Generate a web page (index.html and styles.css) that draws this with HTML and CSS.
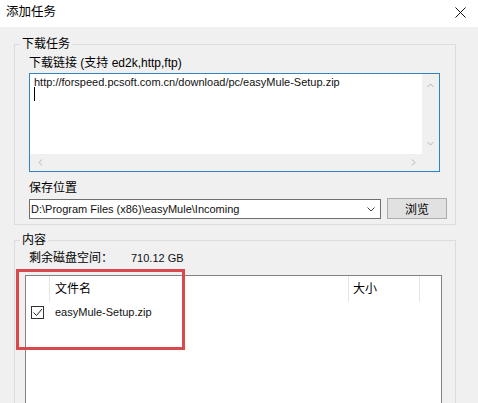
FILE: index.html
```html
<!DOCTYPE html>
<html>

<head>
    <meta charset="utf-8" />
    <title>添加任务</title>
    <link rel="stylesheet" href="styles.css">
</head>

<body>
    <div class="titlebar">
        <span class="title">添加任务</span>
        <svg class="close" width="11" height="11" viewBox="0 0 11 11">
            <path d="M0.5 0.5 L10.5 10.5 M10.5 0.5 L0.5 10.5" stroke="#111" stroke-width="1" fill="none" />
        </svg>
    </div>

    <div class="content">
        <fieldset class="group group-download">
            <legend>下载任务</legend>
            <div class="label">下载链接 (支持 ed2k,http,ftp)</div>
            <div class="textbox">
                <div class="text-area">
                    <div class="text-line latin">http://forspeed.pcsoft.com.cn/download/pc/easyMule-Setup.zip</div>
                    <div class="caret"></div>
                </div>
                <div class="vscroll">
                    <svg width="7" height="5" viewBox="0 0 7 5"><path d="M0.5 4 L3.5 1 L6.5 4" stroke="#b3b3b3" fill="none" /></svg>
                    <svg width="7" height="5" viewBox="0 0 7 5"><path d="M0.5 1 L3.5 4 L6.5 1" stroke="#b3b3b3" fill="none" /></svg>
                </div>
                <div class="hscroll">
                    <svg width="5" height="7" viewBox="0 0 5 7"><path d="M4 0.5 L1 3.5 L4 6.5" stroke="#b3b3b3" fill="none" /></svg>
                    <svg width="5" height="7" viewBox="0 0 5 7"><path d="M1 0.5 L4 3.5 L1 6.5" stroke="#b3b3b3" fill="none" /></svg>
                </div>
                <div class="corner"></div>
            </div>

            <div class="label label-save">保存位置</div>
            <div class="path-row">
                <div class="combo">
                    <span class="latin">D:\Program Files (x86)\easyMule\Incoming</span>
                    <svg width="8" height="5" viewBox="0 0 8 5"><path d="M0.5 0.5 L4 4 L7.5 0.5" stroke="#444" fill="none" /></svg>
                </div>
                <button class="btn">浏览</button>
            </div>
        </fieldset>

        <fieldset class="group group-files">
            <legend>内容</legend>
            <div class="disk">
                <span class="disk-label">剩余磁盘空间：</span>
                <span class="disk-value latin">710.12 GB</span>
            </div>
            <div class="list">
                <div class="list-head">
                    <div class="col col-check"></div>
                    <div class="col col-name">文件名</div>
                    <div class="col col-size">大小</div>
                    <div class="col col-rest"></div>
                </div>
                <div class="list-row">
                    <div class="col col-check">
                        <span class="checkbox">
                            <svg width="11" height="11" viewBox="0 0 11 11"><path d="M1.5 5.5 L4.5 8.5 L10 2" stroke="#222" stroke-width="1" fill="none" /></svg>
                        </span>
                    </div>
                    <div class="col col-name latin">easyMule-Setup.zip</div>
                </div>
            </div>
        </fieldset>
    </div>

    <div class="highlight"></div>
</body>

</html>
```

FILE: styles.css
```css
/* base */

body {
    margin: 0;
    width: 478px;
    height: 403px;
    overflow: hidden;
    position: relative;
    background-color: #f0f0f0;
    color: #000;
    font-family: "Liberation Sans", "Noto Sans CJK SC", sans-serif;
    font-size: 12px;
}

.latin {
    font-size: 11px;
    color: #111;
}

/* title bar */

.titlebar {
    height: 27px;
    background-color: #fff;
    display: flex;
    justify-content: space-between;
    align-items: flex-start;
    padding: 5px 12px 0 6px;
    box-sizing: border-box;
}

.title {
    line-height: 14px;
    font-size: 12.5px;
}

.close {
    margin-top: 2px;
}

/* group boxes */

.content {
    padding: 11px 22px 0 14px;
}

.group {
    margin: 0;
    min-width: 0;
    border: 1px solid #dcdcdc;
}

.group legend {
    line-height: 12px;
    padding: 0 2px;
}

.group-download {
    padding: 5px 8px 5px 14px;
}

.group-download legend {
    margin-left: -9px;
}

.group-files {
    margin-top: 9px;
    padding: 4px 13px 0 10px;
}

.group-files legend {
    margin-left: -5px;
}

.label {
    line-height: 16px;
}

.label-save {
    margin-top: 8px;
}

/* url box */

.textbox {
    margin: 2px 7px 0 0;
    height: 99px;
    box-sizing: border-box;
    border: 1px solid #2f84c4;
    display: grid;
    grid-template-columns: 1fr 17px;
    grid-template-rows: 1fr 17px;
}

.text-area {
    background-color: #fff;
    padding: 2px 0 0 4px;
}

.text-line {
    line-height: 13px;
}

.caret {
    width: 1px;
    height: 14px;
    margin-top: -2px;
    background-color: #000;
}

.vscroll {
    background-color: #f0f0f0;
    display: flex;
    flex-direction: column;
    justify-content: space-between;
    align-items: center;
    padding: 9px 0 8px 0;
}

.hscroll {
    background-color: #f0f0f0;
    display: flex;
    justify-content: space-between;
    align-items: center;
    padding: 0 6px 0 8px;
}

.corner {
    background-color: #f0f0f0;
}

/* save path */

.path-row {
    margin-top: 2px;
    display: flex;
    align-items: flex-start;
    gap: 6px;
}

.combo {
    flex: 1;
    height: 20px;
    margin-top: 1px;
    box-sizing: border-box;
    border: 1px solid #6e6e6e;
    background-color: #fff;
    display: flex;
    justify-content: space-between;
    align-items: center;
    padding: 0 5px 0 1px;
}

.btn {
    width: 60px;
    height: 21px;
    margin: 0;
    padding: 0;
    border: 1px solid #adadad;
    background-color: #e1e1e1;
    font-family: inherit;
    font-size: 12px;
    color: #000;
}

/* file list */

.disk {
    line-height: 16px;
    padding-left: 4px;
    display: flex;
}

.disk-label {
    width: 102px;
}

.list {
    margin-top: 9px;
    height: 160px;
    border: 1px solid #828282;
    background-color: #fff;
}

.list-head,
.list-row {
    display: grid;
    grid-template-columns: 23px 299px 71px 1fr;
}

.list-head {
    height: 26px;
}

.list-head .col {
    line-height: 26px;
}

.list-head .col-name,
.list-head .col-size,
.list-head .col-rest {
    border-left: 1px solid #e5e5e5;
}

.list-head .col-name {
    padding-left: 5px;
}

.list-head .col-size {
    padding-left: 4px;
}

.list-row {
    height: 18px;
    align-items: center;
    margin-top: 1px;
}

.list-row .col-name {
    padding-left: 6px;
}

.checkbox {
    display: flex;
    align-items: center;
    justify-content: center;
    width: 13px;
    height: 13px;
    margin-left: 5px;
    box-sizing: border-box;
    border: 1px solid #333;
    background-color: #fff;
}

/* red marker drawn over the screenshot */

.highlight {
    position: absolute;
    left: 16px;
    top: 269px;
    width: 169px;
    height: 81px;
    box-sizing: border-box;
    border: 3px solid #d9484c;
}
```
